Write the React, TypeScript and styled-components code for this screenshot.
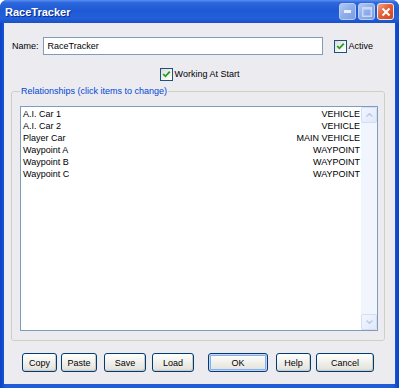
import * as React from "react";
import styled, { createGlobalStyle } from "styled-components";

const GlobalStyle = createGlobalStyle`
  html, body {
    margin: 0;
    padding: 0;
    background: #ffffff;
  }
  body {
    font-family: "Liberation Sans", Arial, sans-serif;
    font-size: 9px;
    color: #000;
  }
`;

const Window = styled.div`
  width: 399px;
  height: 388px;
  box-sizing: border-box;
  display: flex;
  flex-direction: column;
  background: linear-gradient(90deg, #0842c9 0%, #1f5cd8 1.5%, #1f5cd8 98.5%, #0842c9 100%);
  border-radius: 7px 7px 0 0;
  overflow: hidden;
`;

const TitleBar = styled.div`
  height: 23px;
  flex: none;
  display: flex;
  align-items: center;
  padding: 0 5px 0 5px;
  background: linear-gradient(
    180deg,
    #5b8ff0 0%,
    #2b66dc 12%,
    #1f5ad5 45%,
    #2260d9 80%,
    #1a4fc8 100%
  );
`;

const Title = styled.div`
  flex: 1;
  color: #fff;
  font-weight: bold;
  font-size: 11px;
  text-shadow: 1px 1px 0 #0a2a8c;
`;

const CaptionButton = styled.div<{ $close?: boolean }>`
  width: 17px;
  height: 17px;
  margin-left: 2px;
  box-sizing: border-box;
  border: 1px solid ${(p) => (p.$close ? "#f4e6e0" : "#b9cdf3")};
  border-radius: 3px;
  display: flex;
  align-items: center;
  justify-content: center;
  background: ${(p) =>
    p.$close
      ? "linear-gradient(135deg, #f3a385 0%, #e4603a 45%, #cc4520 100%)"
      : "linear-gradient(135deg, #b3c9f3 0%, #8eaeea 50%, #7b9de4 100%)"};
`;

const Body = styled.div`
  flex: 1;
  margin: 0 4px 4px 4px;
  background: #ecebf0;
  display: flex;
  flex-direction: column;
`;

const NameRow = styled.div`
  display: flex;
  align-items: center;
  height: 18px;
  margin: 14px 0 0 8px;
`;

const Label = styled.span`
  margin-right: 4px;
`;

const TextInput = styled.div`
  width: 280px;
  height: 18px;
  box-sizing: border-box;
  border: 1px solid #7f9db9;
  background: #fff;
  padding: 0 4px;
  display: flex;
  align-items: center;
`;

const CheckLine = styled.div<{ $center?: boolean }>`
  display: flex;
  align-items: center;
  gap: 2px;
  margin-left: ${(p) => (p.$center ? "0" : "11px")};
  justify-content: ${(p) => (p.$center ? "center" : "flex-start")};
`;

const CenterRow = styled.div`
  display: flex;
  justify-content: center;
  height: 12px;
  margin-top: 13px;
`;

const Box = styled.span`
  width: 13px;
  height: 13px;
  box-sizing: border-box;
  border: 1px solid #1c5180;
  background: linear-gradient(135deg, #dcdcd7 0%, #f4f4f0 60%, #ffffff 100%);
  display: inline-flex;
  align-items: center;
  justify-content: center;
`;

const Group = styled.fieldset`
  margin: 6px 10px 0 7px;
  padding: 10px 6px 9px 8px;
  border: 1px solid #d0d0bf;
  border-radius: 3px;
  min-width: 0;
`;

const Legend = styled.legend`
  color: #0046d5;
  line-height: 10px;
  padding: 0 1px;
  margin-left: 0;
`;

const ListBox = styled.div`
  height: 225px;
  box-sizing: border-box;
  border: 1px solid #7f9db9;
  background: #fff;
  display: flex;
`;

const Items = styled.div`
  flex: 1;
  padding: 1px 1px 0 2px;
`;

const Item = styled.div`
  display: flex;
  justify-content: space-between;
  line-height: 12px;
  height: 12px;
`;

const ScrollBar = styled.div`
  width: 16px;
  display: flex;
  flex-direction: column;
  background: #f1f5fd;
`;

const ScrollTrack = styled.div`
  flex: 1;
`;

const ArrowButton = styled.div`
  height: 16px;
  box-sizing: border-box;
  border: 1px solid #d3def6;
  border-radius: 2px;
  background: linear-gradient(135deg, #f3f6fd 0%, #e0e8fa 100%);
  display: flex;
  align-items: center;
  justify-content: center;
`;

const ButtonRow = styled.div`
  display: flex;
  height: 19px;
  margin: 12px 0 0 18px;
`;

const Button = styled.div<{ $w: number; $ml?: number; $default?: boolean }>`
  width: ${(p) => p.$w}px;
  margin-left: ${(p) => p.$ml ?? 0}px;
  height: 19px;
  box-sizing: border-box;
  border: 1px solid #003c74;
  border-radius: 3px;
  background: linear-gradient(180deg, #ffffff 0%, #f3f3ef 40%, #e6e5df 85%, #d6d2c8 100%);
  box-shadow: ${(p) =>
    p.$default
      ? "inset 0 0 0 1px #c3d5f5, inset 0 0 0 2px #8aaeea"
      : "inset -1px -1px 0 #cdcbc2"};
  display: flex;
  align-items: center;
  justify-content: center;
`;

const CheckBox = () => (
  <Box>
    <svg width="9" height="9" viewBox="0 0 9 9">
      <path d="M1.2 4 L3.4 6.3 L7.8 1.6" fill="none" stroke="#21a121" strokeWidth="1.8" />
    </svg>
  </Box>
);

const items = [
  { name: "A.I. Car 1", kind: "VEHICLE" },
  { name: "A.I. Car 2", kind: "VEHICLE" },
  { name: "Player Car", kind: "MAIN VEHICLE" },
  { name: "Waypoint A", kind: "WAYPOINT" },
  { name: "Waypoint B", kind: "WAYPOINT" },
  { name: "Waypoint C", kind: "WAYPOINT" },
];

const App = () => {
  return (
    <>
      <GlobalStyle />
      <Window>
        <TitleBar>
          <Title>RaceTracker</Title>
          <CaptionButton>
            <svg width="7" height="3" viewBox="0 0 7 3">
              <rect x="0" y="0" width="7" height="3" fill="#e8eefc" />
            </svg>
          </CaptionButton>
          <CaptionButton>
            <svg width="10" height="10" viewBox="0 0 10 10">
              <rect x="0.75" y="0.75" width="8.5" height="8.5" fill="none" stroke="#c9d8f6" strokeWidth="1.5" />
              <rect x="0" y="0" width="10" height="2.5" fill="#c9d8f6" />
            </svg>
          </CaptionButton>
          <CaptionButton $close>
            <svg width="10" height="10" viewBox="0 0 10 10">
              <path d="M1.5 1.5 L8.5 8.5 M8.5 1.5 L1.5 8.5" stroke="#fff" strokeWidth="2" />
            </svg>
          </CaptionButton>
        </TitleBar>
        <Body>
          <NameRow>
            <Label>Name:</Label>
            <TextInput>RaceTracker</TextInput>
            <CheckLine>
              <CheckBox />
              <span>Active</span>
            </CheckLine>
          </NameRow>
          <CenterRow>
            <CheckLine $center>
              <CheckBox />
              <span>Working At Start</span>
            </CheckLine>
          </CenterRow>
          <Group>
            <Legend>Relationships (click items to change)</Legend>
            <ListBox>
              <Items>
                {items.map((it) => (
                  <Item key={it.name}>
                    <span>{it.name}</span>
                    <span>{it.kind}</span>
                  </Item>
                ))}
              </Items>
              <ScrollBar>
                <ArrowButton>
                  <svg width="7" height="4" viewBox="0 0 7 4">
                    <path d="M0.5 3.5 L3.5 0.7 L6.5 3.5" fill="none" stroke="#b7c7ea" strokeWidth="1.3" />
                  </svg>
                </ArrowButton>
                <ScrollTrack />
                <ArrowButton>
                  <svg width="7" height="4" viewBox="0 0 7 4">
                    <path d="M0.5 0.5 L3.5 3.3 L6.5 0.5" fill="none" stroke="#b7c7ea" strokeWidth="1.3" />
                  </svg>
                </ArrowButton>
              </ScrollBar>
            </ListBox>
          </Group>
          <ButtonRow>
            <Button $w={35}>Copy</Button>
            <Button $w={36} $ml={4}>Paste</Button>
            <Button $w={42} $ml={7}>Save</Button>
            <Button $w={42} $ml={6}>Load</Button>
            <Button $w={60} $ml={14} $default>OK</Button>
            <Button $w={35} $ml={8}>Help</Button>
            <Button $w={58} $ml={5}>Cancel</Button>
          </ButtonRow>
        </Body>
      </Window>
    </>
  );
};

export default App;
